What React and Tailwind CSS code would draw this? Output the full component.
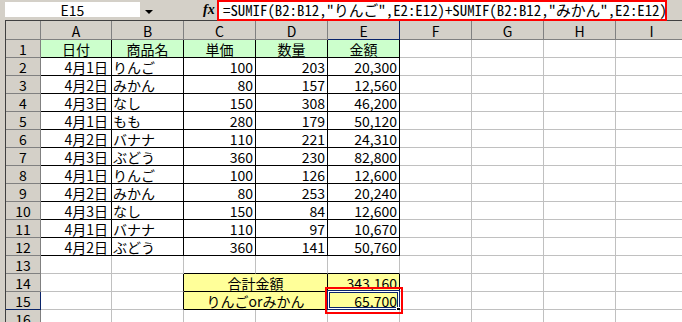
import React from 'react';

const COLS = ['A', 'B', 'C', 'D', 'E', 'F', 'G', 'H', 'I'];
const COL_W = ['w-[71px]', 'w-[72px]', 'w-[72px]', 'w-[72px]', 'w-[72px]', 'w-[72px]', 'w-[72px]', 'w-[72px]', 'w-[72px]'];

// 売上データ
const sales = [
  ['4月1日', 'りんご', '100', '203', '20,300'],
  ['4月2日', 'みかん', '80', '157', '12,560'],
  ['4月3日', 'なし', '150', '308', '46,200'],
  ['4月1日', 'もも', '280', '179', '50,120'],
  ['4月2日', 'バナナ', '110', '221', '24,310'],
  ['4月3日', 'ぶどう', '360', '230', '82,800'],
  ['4月1日', 'りんご', '100', '126', '12,600'],
  ['4月2日', 'みかん', '80', '253', '20,240'],
  ['4月3日', 'なし', '150', '84', '12,600'],
  ['4月1日', 'バナナ', '110', '97', '10,670'],
  ['4月2日', 'ぶどう', '360', '141', '50,760'],
];

const FORMULA = '=SUMIF(B2:B12,"りんご",E2:E12)+SUMIF(B2:B12,"みかん",E2:E12)';

// 罫線で囲まれた範囲
const inBox = (r, c) => (r >= 1 && r <= 12 && c >= 0 && c <= 4) || (r >= 14 && r <= 15 && c >= 2 && c <= 4);

function cellData(r, c) {
  if (r === 1 && c <= 4) return { text: ['日付', '商品名', '単価', '数量', '金額'][c], align: 'center', bg: 'green' };
  if (r >= 2 && r <= 12 && c <= 4) return { text: sales[r - 2][c], align: c === 1 ? 'left' : c === 0 ? 'date' : 'right' };
  if (r === 14 && c === 2) return { text: '合計金額', align: 'center', bg: 'yellow', merged: true };
  if (r === 15 && c === 2) return { text: 'りんごorみかん', align: 'center', bg: 'yellow', merged: true };
  if (r === 14 && c === 4) return { text: '343,160', align: 'right', bg: 'yellow' };
  if (r === 15 && c === 4) return { text: '65,700', align: 'right', bg: 'yellow', selected: true };
  return { text: '', align: 'left' };
}

function Cell({ r, c }) {
  const d = cellData(r, c);
  const rightBlack = inBox(r, c) || inBox(r, c + 1);
  const bottomBlack = inBox(r, c) || inBox(r + 1, c);
  const width = d.merged ? 'w-[144px]' : COL_W[c];
  const bg = d.bg === 'green' ? 'bg-[#ccffcc]' : d.bg === 'yellow' ? 'bg-[#ffff99]' : 'bg-white';
  const justify =
    d.align === 'center'
      ? 'justify-center'
      : d.align === 'right'
      ? 'justify-end pr-[2px]'
      : d.align === 'date'
      ? 'justify-end pr-[3px]'
      : 'justify-start pl-[1px]';

  return (
    <div
      className={`relative flex h-full shrink-0 items-center whitespace-nowrap border-r border-b ${width} ${bg} ${justify} ${
        rightBlack ? 'border-r-black' : 'border-r-[#c0c0c0]'
      } ${bottomBlack ? 'border-b-black' : 'border-b-[#c0c0c0]'}`}
    >
      {d.text && <span className="pt-[1px] leading-[15px]">{d.text}</span>}
      {d.selected && (
        <>
          <div className="pointer-events-none absolute -left-[1px] -top-[2px] h-[20px] w-[73px] border border-[#0a246a]">
            <div className="h-full w-full border border-white">
              <div className="h-full w-full border border-[#0a246a]" />
            </div>
          </div>
          <div className="absolute -bottom-[4px] -right-[3px] h-[6px] w-[6px] border border-white bg-black" />
          <div className="pointer-events-none absolute -left-[3px] -top-[5px] z-10 h-[27px] w-[78px] border-2 border-[#ff0000]" />
        </>
      )}
    </div>
  );
}

function FormulaBar() {
  return (
    <div className="flex h-[20px] items-start">
      <div className="ml-[5px] mt-[2px] flex h-[15px] w-[135px] items-center justify-center bg-white pt-[1px]">E15</div>
      <div className="ml-[5px] mt-[10px] h-0 w-0 border-x-[4px] border-t-[4px] border-x-transparent border-t-black" />
      <div className="ml-[50px] mt-[1px] w-[14px] font-['Liberation_Serif',serif] text-[14px] font-bold italic leading-[18px]">fx</div>
      <div className="relative z-10 flex h-[21px] w-[450px] items-center whitespace-nowrap border-2 border-[#ff0000] bg-white pl-[4px] font-['Noto_Sans_Mono_CJK_JP','Noto_Sans_CJK_JP',monospace] text-[14.8px]">
        {FORMULA}
      </div>
    </div>
  );
}

function Sheet() {
  const rows = Array.from({ length: 16 }, (_, i) => i + 1);
  return (
    <div className="ml-[5px] border-l border-t border-[#404040]">
      <div className="flex h-[19px]">
        <div className="w-[35px] shrink-0 border-r border-b border-[#808080] bg-[#d4d0c8]" />
        {COLS.map((col, c) => (
          <div
            key={col}
            className={`flex shrink-0 items-center justify-center border-r border-b bg-[#d4d0c8] pt-[1px] ${COL_W[c]} ${
              col === 'E' ? 'border-[#0a246a]' : 'border-[#808080]'
            }`}
          >
            {col}
          </div>
        ))}
      </div>
      {rows.map((r) => (
        <div key={r} className="flex h-[18px]">
          <div
            className={`flex w-[35px] shrink-0 items-center justify-center border-r border-b bg-[#d4d0c8] pt-[1px] ${
              r === 15 ? 'border-[#0a246a]' : 'border-[#808080]'
            }`}
          >
            {r}
          </div>
          {COLS.map((col, c) => {
            if ((r === 14 || r === 15) && c === 3) return null;
            return <Cell key={col} r={r} c={c} />;
          })}
        </div>
      ))}
    </div>
  );
}

export default function App() {
  return (
    <div className="h-[322px] w-[682px] overflow-hidden bg-[#d4d0c8] font-['Noto_Sans_CJK_JP',sans-serif] text-[14px] leading-none text-black">
      <FormulaBar />
      <Sheet />
    </div>
  );
}
